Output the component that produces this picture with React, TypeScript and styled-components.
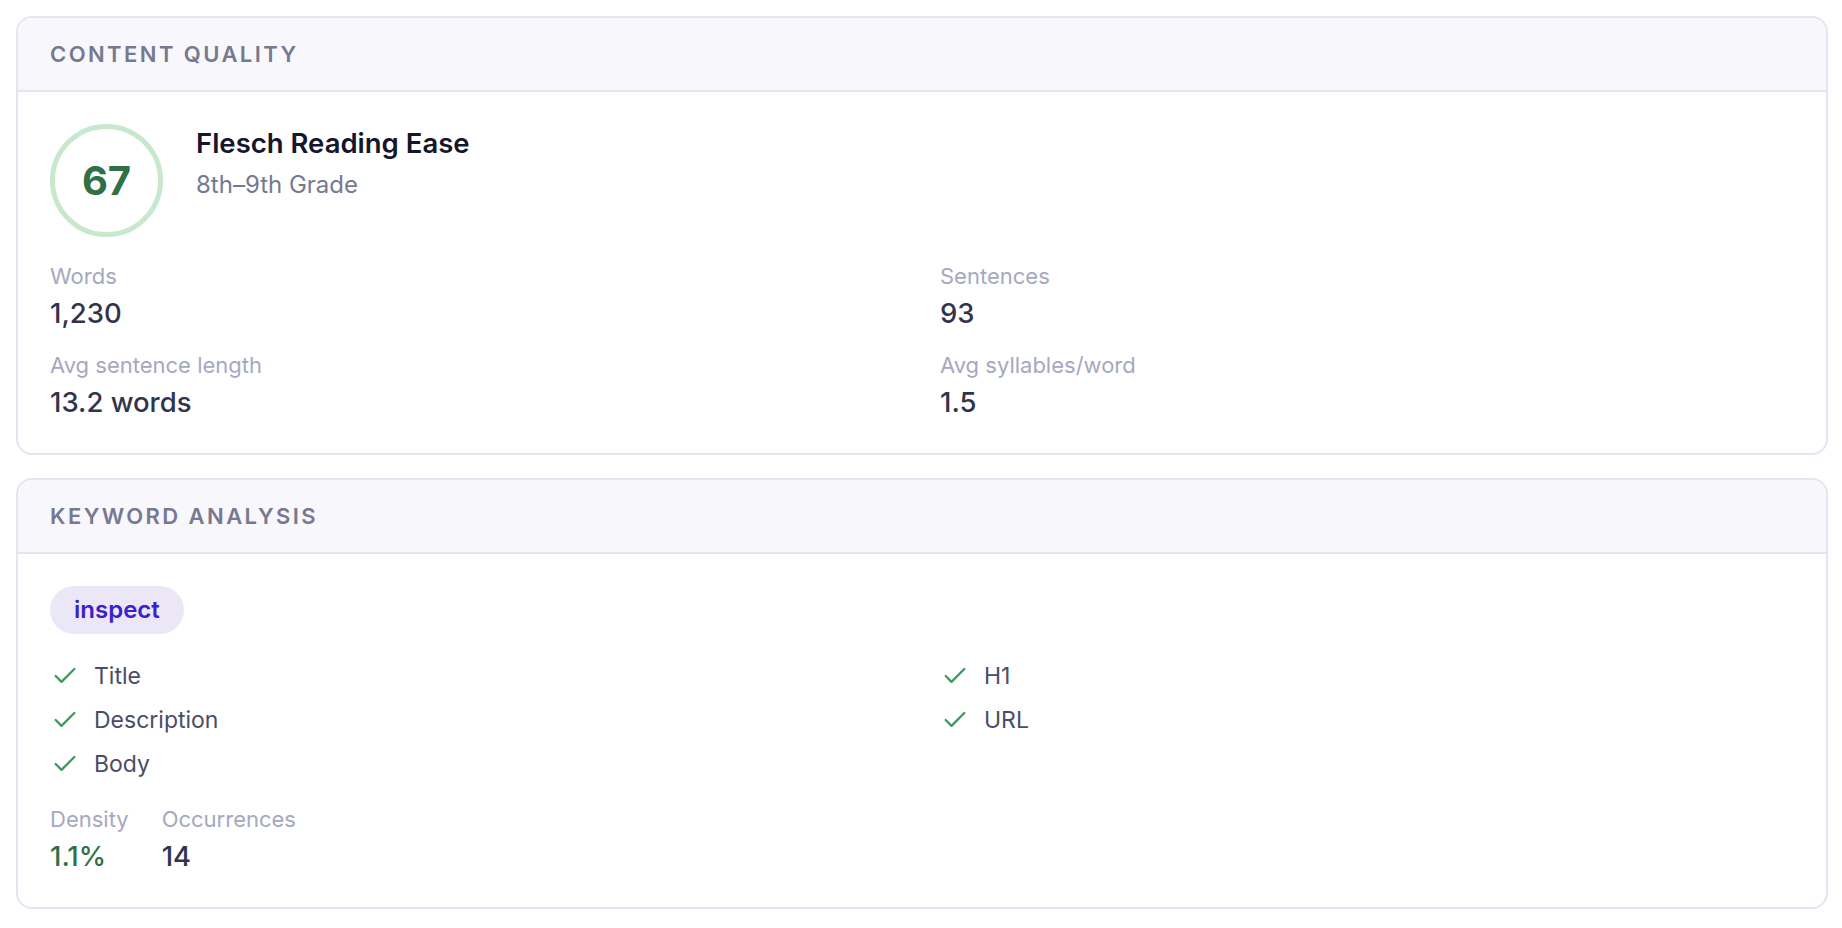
import React from 'react';
import styled, { createGlobalStyle } from 'styled-components';
import { Check } from 'lucide-react';

const GlobalStyle = createGlobalStyle`
  html, body {
    margin: 0;
    padding: 0;
    background: #ffffff;
  }
  body {
    font-family: Inter, "Noto Sans", "Liberation Sans", sans-serif;
    -webkit-font-smoothing: antialiased;
  }
`;

const Page = styled.div`
  display: flex;
  flex-direction: column;
  gap: 23px;
  padding: 16px 14px 16px 16px;
`;

const Card = styled.section`
  border: 2px solid #e6e4f1;
  border-radius: 16px;
  background: #ffffff;
  overflow: hidden;
`;

const CardHeader = styled.header`
  display: flex;
  align-items: center;
  height: 72px;
  padding: 0 32px;
  background: #f8f7fc;
  border-bottom: 2px solid #e6e4f1;
`;

const CardTitle = styled.h2`
  margin: 0;
  font-size: 22px;
  font-weight: 600;
  letter-spacing: 0.11em;
  text-transform: uppercase;
  color: #767990;
`;

const CardBody = styled.div`
  display: flex;
  flex-direction: column;
  padding: 32px 32px 32px;
`;

const ScoreRow = styled.div`
  display: flex;
  align-items: flex-start;
  gap: 33px;
  margin-bottom: 24px;
`;

const ScoreRing = styled.div<{ $ring: string; $color: string }>`
  display: flex;
  align-items: center;
  justify-content: center;
  width: 113px;
  height: 113px;
  box-sizing: border-box;
  border-radius: 50%;
  border: 5px solid ${(p) => p.$ring};
  color: ${(p) => p.$color};
  font-size: 40px;
  font-weight: 700;
  flex-shrink: 0;
`;

const ScoreText = styled.div`
  display: flex;
  flex-direction: column;
  gap: 7px;
  padding-top: 2px;
`;

const ScoreName = styled.div`
  font-size: 27.5px;
  font-weight: 600;
  color: #15152b;
  line-height: 1.3;
`;

const ScoreGrade = styled.div`
  font-size: 24px;
  color: #767990;
  line-height: 1.3;
`;

const StatGrid = styled.div`
  display: grid;
  grid-template-columns: 1fr 1fr;
  column-gap: 36px;
  row-gap: 18px;
`;

const Stat = styled.div`
  display: flex;
  flex-direction: column;
  gap: 3px;
`;

const StatLabel = styled.div`
  font-size: 22px;
  color: #a6a8bf;
  line-height: 1.4;
`;

const StatValue = styled.div<{ $tone?: 'green' }>`
  font-size: 27.5px;
  font-weight: 500;
  line-height: 1.35;
  color: ${(p) => (p.$tone === 'green' ? '#2f7147' : '#31344b')};
`;

const Pill = styled.span`
  align-self: flex-start;
  display: inline-flex;
  align-items: center;
  height: 48px;
  padding: 0 24px;
  border-radius: 24px;
  background: #ebe7f7;
  color: #3a21cc;
  font-size: 24px;
  font-weight: 600;
  margin-bottom: 26px;
`;

const CheckGrid = styled.ul`
  display: grid;
  grid-template-columns: 1fr 1fr;
  grid-template-rows: repeat(3, 33px);
  grid-auto-flow: column;
  column-gap: 36px;
  row-gap: 11px;
  margin: 0 0 23px;
  padding: 0;
  list-style: none;
`;

const CheckItem = styled.li`
  display: flex;
  align-items: center;
  gap: 15px;
  padding-left: 1px;
  font-size: 23px;
  color: #4a4d66;
`;

const CheckMark = styled(Check)`
  color: #3e9a5f;
  flex-shrink: 0;
`;

const MetricRow = styled.div`
  display: flex;
  gap: 33px;
`;

const readability = [
  { label: 'Words', value: '1,230' },
  { label: 'Sentences', value: '93' },
  { label: 'Avg sentence length', value: '13.2 words' },
  { label: 'Avg syllables/word', value: '1.5' },
];

const placements = ['Title', 'Description', 'Body', 'H1', 'URL'];

export default function App() {
  return (
    <>
      <GlobalStyle />
      <Page>
        <Card>
          <CardHeader>
            <CardTitle>Content Quality</CardTitle>
          </CardHeader>
          <CardBody>
            <ScoreRow>
              <ScoreRing $ring="#c6e8cd" $color="#2f7147">67</ScoreRing>
              <ScoreText>
                <ScoreName>Flesch Reading Ease</ScoreName>
                <ScoreGrade>8th–9th Grade</ScoreGrade>
              </ScoreText>
            </ScoreRow>
            <StatGrid>
              {readability.map((s) => (
                <Stat key={s.label}>
                  <StatLabel>{s.label}</StatLabel>
                  <StatValue>{s.value}</StatValue>
                </Stat>
              ))}
            </StatGrid>
          </CardBody>
        </Card>

        <Card>
          <CardHeader>
            <CardTitle>Keyword Analysis</CardTitle>
          </CardHeader>
          <CardBody>
            <Pill>inspect</Pill>
            <CheckGrid>
              {placements.map((p) => (
                <CheckItem key={p}>
                  <CheckMark size={28} strokeWidth={2} />
                  {p}
                </CheckItem>
              ))}
            </CheckGrid>
            <MetricRow>
              <Stat>
                <StatLabel>Density</StatLabel>
                <StatValue $tone="green">1.1%</StatValue>
              </Stat>
              <Stat>
                <StatLabel>Occurrences</StatLabel>
                <StatValue>14</StatValue>
              </Stat>
            </MetricRow>
          </CardBody>
        </Card>
      </Page>
    </>
  );
}
